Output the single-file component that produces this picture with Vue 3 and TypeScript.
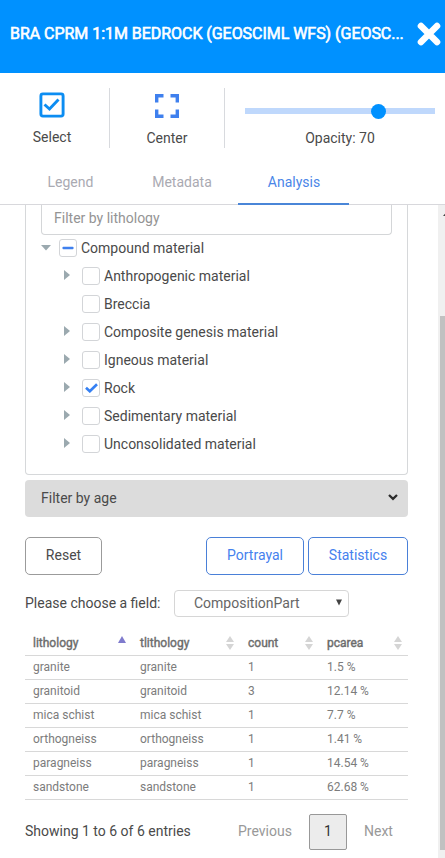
<script setup lang="ts">
import { ref } from 'vue'

interface TreeItem {
  label: string
  expandable: boolean
  checked: boolean
}

interface Row {
  lithology: string
  count: number
  pcarea: string
}

const opacity = ref(70)

const tree = ref<TreeItem[]>([
  { label: 'Anthropogenic material', expandable: true, checked: false },
  { label: 'Breccia', expandable: false, checked: false },
  { label: 'Composite genesis material', expandable: true, checked: false },
  { label: 'Igneous material', expandable: true, checked: false },
  { label: 'Rock', expandable: true, checked: true },
  { label: 'Sedimentary material', expandable: true, checked: false },
  { label: 'Unconsolidated material', expandable: true, checked: false },
])

const columns = ['lithology', 'tlithology', 'count', 'pcarea']

const rows: Row[] = [
  { lithology: 'granite', count: 1, pcarea: '1.5 %' },
  { lithology: 'granitoid', count: 3, pcarea: '12.14 %' },
  { lithology: 'mica schist', count: 1, pcarea: '7.7 %' },
  { lithology: 'orthogneiss', count: 1, pcarea: '1.41 %' },
  { lithology: 'paragneiss', count: 1, pcarea: '14.54 %' },
  { lithology: 'sandstone', count: 1, pcarea: '62.68 %' },
]
</script>

<template>
  <div class="app">
    <header class="header">
      <h1 class="title">BRA CPRM 1:1M BEDROCK (GEOSCIML WFS) (GEOSC...</h1>
      <svg class="close" width="24" height="24" viewBox="0 0 24 24">
        <path d="M4 4L20 20M20 4L4 20" stroke="#fff" stroke-width="6.6" stroke-linecap="round" />
      </svg>
    </header>

    <section class="tools">
      <div class="tool select">
        <svg width="26" height="26" viewBox="0 0 26 26" fill="none">
          <rect x="1.9" y="1.9" width="22.2" height="22.2" rx="2" stroke="#0c8df2" stroke-width="2.9" />
          <path d="M5.5 12.5L10.5 17L19.5 7.5" stroke="#0c8df2" stroke-width="2.9" />
        </svg>
        <span>Select</span>
      </div>
      <div class="tool center">
        <svg width="24" height="24" viewBox="0 0 24 24" fill="none" stroke="#3f80ee" stroke-width="3.4">
          <path d="M1.7 8.5V1.7H8.5M15.5 1.7H22.3V8.5M22.3 15.5V22.3H15.5M8.5 22.3H1.7V15.5" />
        </svg>
        <span>Center</span>
      </div>
      <div class="tool opacity">
        <div class="track">
          <div class="fill" :style="{ width: opacity + '%' }"></div>
          <div class="knob"></div>
        </div>
        <span>Opacity: {{ opacity }}</span>
      </div>
    </section>

    <nav class="tabs">
      <span class="tab">Legend</span>
      <span class="tab">Metadata</span>
      <span class="tab active">Analysis</span>
    </nav>

    <div class="body">
      <main class="content">
        <section class="panel">
          <div class="search">Filter by lithology</div>
          <div class="node root">
            <svg class="caret" width="10" height="6" viewBox="0 0 10 6"><path d="M0 0H10L5 5.5Z" fill="#9ba9af" /></svg>
            <span class="box">
              <svg width="12" height="4" viewBox="0 0 12 4"><rect x=".5" y=".7" width="11" height="2.6" rx=".8" fill="#3f80ee" /></svg>
            </span>
            <span>Compound material</span>
          </div>
          <div v-for="item in tree" :key="item.label" class="node child">
            <svg class="caret" width="10" height="10" viewBox="0 0 10 10">
              <path v-if="item.expandable" d="M0 0L6 5L0 10Z" fill="#9ba9af" />
            </svg>
            <span class="box">
              <svg v-if="item.checked" width="13" height="10" viewBox="0 0 13 10" fill="none">
                <path d="M1 4.7L4.8 8.3L12 1.2" stroke="#3580f3" stroke-width="2.6" />
              </svg>
            </span>
            <span>{{ item.label }}</span>
          </div>
        </section>

        <div class="age">
          <span>Filter by age</span>
          <svg width="10" height="7" viewBox="0 0 10 7" fill="none"><path d="M1 1L5 4.8L9 1" stroke="#2c2c2c" stroke-width="2.3" /></svg>
        </div>

        <div class="actions">
          <button class="btn reset">Reset</button>
          <button class="btn blue portrayal">Portrayal</button>
          <button class="btn blue statistics">Statistics</button>
        </div>

        <div class="field">
          <span>Please choose a field:</span>
          <div class="dropdown">
            <span>CompositionPart</span>
            <svg width="6" height="7" viewBox="0 0 6 7"><path d="M0 .5H6L3 6.5Z" fill="#444" /></svg>
          </div>
        </div>

        <table class="grid">
          <thead>
            <tr>
              <th v-for="(col, i) in columns" :key="col">
                <div class="head">
                  <span>{{ col }}</span>
                  <svg v-if="i === 0" class="sorted" width="8" height="14" viewBox="0 0 8 14"><path d="M0 7L4 0L8 7Z" fill="#7f7bcd" /></svg>
                  <svg v-else width="8" height="14" viewBox="0 0 8 14"><path d="M0 6L4 0L8 6ZM0 8H8L4 14Z" fill="#d5d5d5" /></svg>
                </div>
              </th>
            </tr>
          </thead>
          <tbody>
            <tr v-for="row in rows" :key="row.lithology">
              <td>{{ row.lithology }}</td>
              <td>{{ row.lithology }}</td>
              <td>{{ row.count }}</td>
              <td>{{ row.pcarea }}</td>
            </tr>
          </tbody>
        </table>

        <footer class="pager">
          <span class="info">Showing 1 to 6 of 6 entries</span>
          <span class="step">Previous</span>
          <span class="page">1</span>
          <span class="step">Next</span>
        </footer>
      </main>

      <aside class="scrollbar">
        <svg width="7" height="111" viewBox="0 0 7 111"><path d="M5 11L8 7.5V11Z" fill="#444" /></svg>
        <div class="thumb"></div>
      </aside>
    </div>
  </div>
</template>

<style>
body {
  margin: 0;
  background: #fff;
}
</style>

<style scoped>
.app {
  box-sizing: border-box;
  width: 445px;
  height: 858px;
  display: flex;
  flex-direction: column;
  overflow: hidden;
  background: #fff;
  color: #4a4a4a;
  font-family: Roboto, "Liberation Sans", sans-serif;
  font-size: 14px;
  line-height: 20px;
}
.app * {
  box-sizing: border-box;
}
.header {
  flex: none;
  height: 73px;
  display: flex;
  align-items: center;
  justify-content: space-between;
  padding: 0 4px 5px 10px;
  background: #0091ff;
}
.title {
  margin: 0;
  color: #fff;
  font-size: 16px;
  font-weight: 400;
  letter-spacing: -0.04px;
  -webkit-text-stroke: 0.6px #fff;
  white-space: nowrap;
}
.tools {
  flex: none;
  height: 87px;
  display: flex;
  padding-top: 15px;
}
.tool {
  height: 60px;
  display: flex;
  flex-direction: column;
  align-items: center;
}
.select {
  width: 110px;
  border-right: 1px solid #d8dade;
  padding: 4px 5px 0 0;
  gap: 9px;
}
.center {
  width: 115px;
  border-right: 1px solid #d8dade;
  padding-top: 6px;
  gap: 10px;
}
.opacity {
  flex: 1;
  padding: 20px 10px 0 20px;
  gap: 14px;
}
.track {
  width: 190px;
  height: 6px;
  display: flex;
  align-items: center;
  background: #bfd8fc;
}
.fill {
  height: 6px;
}
.knob {
  flex: none;
  width: 15px;
  height: 15px;
  margin-left: -7px;
  border-radius: 50%;
  background: #0091ff;
}
.tabs {
  flex: none;
  height: 45px;
  display: flex;
  padding-left: 15px;
  border-bottom: 1px solid #d8d8dc;
}
.tab {
  width: 112px;
  height: 45px;
  padding-top: 12px;
  text-align: center;
  color: #aaaab2;
}
.tab:first-child {
  width: 111px;
}
.tab.active {
  width: 111px;
  padding-left: 1px;
  color: #4a86e8;
  border-bottom: 2px solid #4a86d8;
}
.body {
  flex: 1;
  min-height: 0;
  display: flex;
  justify-content: space-between;
}
.content {
  width: 408px;
  padding-left: 25px;
}
.panel {
  height: 270px;
  border: 1px solid #d6d8da;
  border-top: none;
  border-radius: 0 0 4px 4px;
  padding: 0 15px;
}
.search {
  height: 30px;
  margin-bottom: -1px;
  border: 1px solid #d4d6d8;
  border-top: none;
  border-radius: 0 0 4px 4px;
  padding: 3px 12px;
  color: #949494;
}
.node {
  height: 28px;
  display: flex;
  align-items: center;
}
.child {
  padding-left: 23px;
}
.caret {
  flex: none;
  margin-right: 8px;
}
.child .caret {
  margin-top: -2px;
}
.box {
  width: 18px;
  height: 18px;
  display: flex;
  align-items: center;
  justify-content: center;
  margin-right: 4px;
  border: 1px solid #d3d5d8;
  border-radius: 3px;
}
.age {
  height: 37px;
  margin-top: 5px;
  padding: 0 10px 1px 16px;
  display: flex;
  align-items: center;
  justify-content: space-between;
  background: #dcdcdc;
  border-radius: 4px;
}
.age svg {
  margin-top: -2px;
}
.actions {
  display: flex;
  gap: 4px;
  margin-top: 20px;
}
.btn {
  height: 38px;
  padding: 0 0 2px;
  border: 1px solid #9b9b9b;
  border-radius: 5px;
  background: #fff;
  color: #4a4a4a;
  font: inherit;
}
.reset {
  width: 77px;
  margin-right: auto;
}
.blue {
  border-color: #4a80d8;
  color: #4581ee;
}
.portrayal {
  width: 98px;
}
.statistics {
  width: 100px;
}
.field {
  height: 27px;
  margin-top: 15px;
  display: flex;
  align-items: center;
}
.field > span {
  width: 149px;
  padding-bottom: 2px;
  white-space: nowrap;
}
.dropdown {
  width: 175px;
  height: 27px;
  display: flex;
  align-items: center;
  justify-content: space-between;
  padding: 0 6px 2px 19px;
  border: 1px solid #d6d6d6;
  border-radius: 4px;
  color: #666;
}
.grid {
  width: 383px;
  margin-top: 14px;
  table-layout: fixed;
  border-collapse: separate;
  border-spacing: 0;
  font-size: 12px;
  line-height: 16px;
  color: #7c7c7c;
}
.grid th,
.grid td {
  height: 24px;
  padding: 0 0 1px 8px;
  border-bottom: 1px solid #d8d8d8;
  text-align: left;
  font-weight: 400;
}
.grid th {
  height: 25px;
  padding-right: 6px;
  color: #6c6c6c;
  -webkit-text-stroke: 0.4px #6c6c6c;
}
.grid th:nth-child(1) {
  width: 107px;
}
.grid th:nth-child(2) {
  width: 108px;
}
.grid th:nth-child(3) {
  width: 79px;
}
.head {
  display: flex;
  align-items: center;
  justify-content: space-between;
}
.pager {
  height: 36px;
  margin-top: 14px;
  display: flex;
  align-items: center;
  color: #999;
}
.info {
  width: 213px;
  padding-bottom: 3px;
  color: #4a4a4a;
}
.step {
  padding-bottom: 2px;
}
.pager .step:nth-child(2) {
  width: 71px;
}
.page {
  width: 38px;
  height: 36px;
  margin-right: 17px;
  border: 1px solid #989898;
  border-radius: 2px;
  background: #ececec;
  color: #333;
  line-height: 33px;
  text-align: center;
}
.scrollbar {
  width: 7px;
  display: flex;
  flex-direction: column;
  background: #f0f0f0;
}
.thumb {
  height: 534px;
  margin-left: 2px;
  background: #c1c1c1;
}
</style>
